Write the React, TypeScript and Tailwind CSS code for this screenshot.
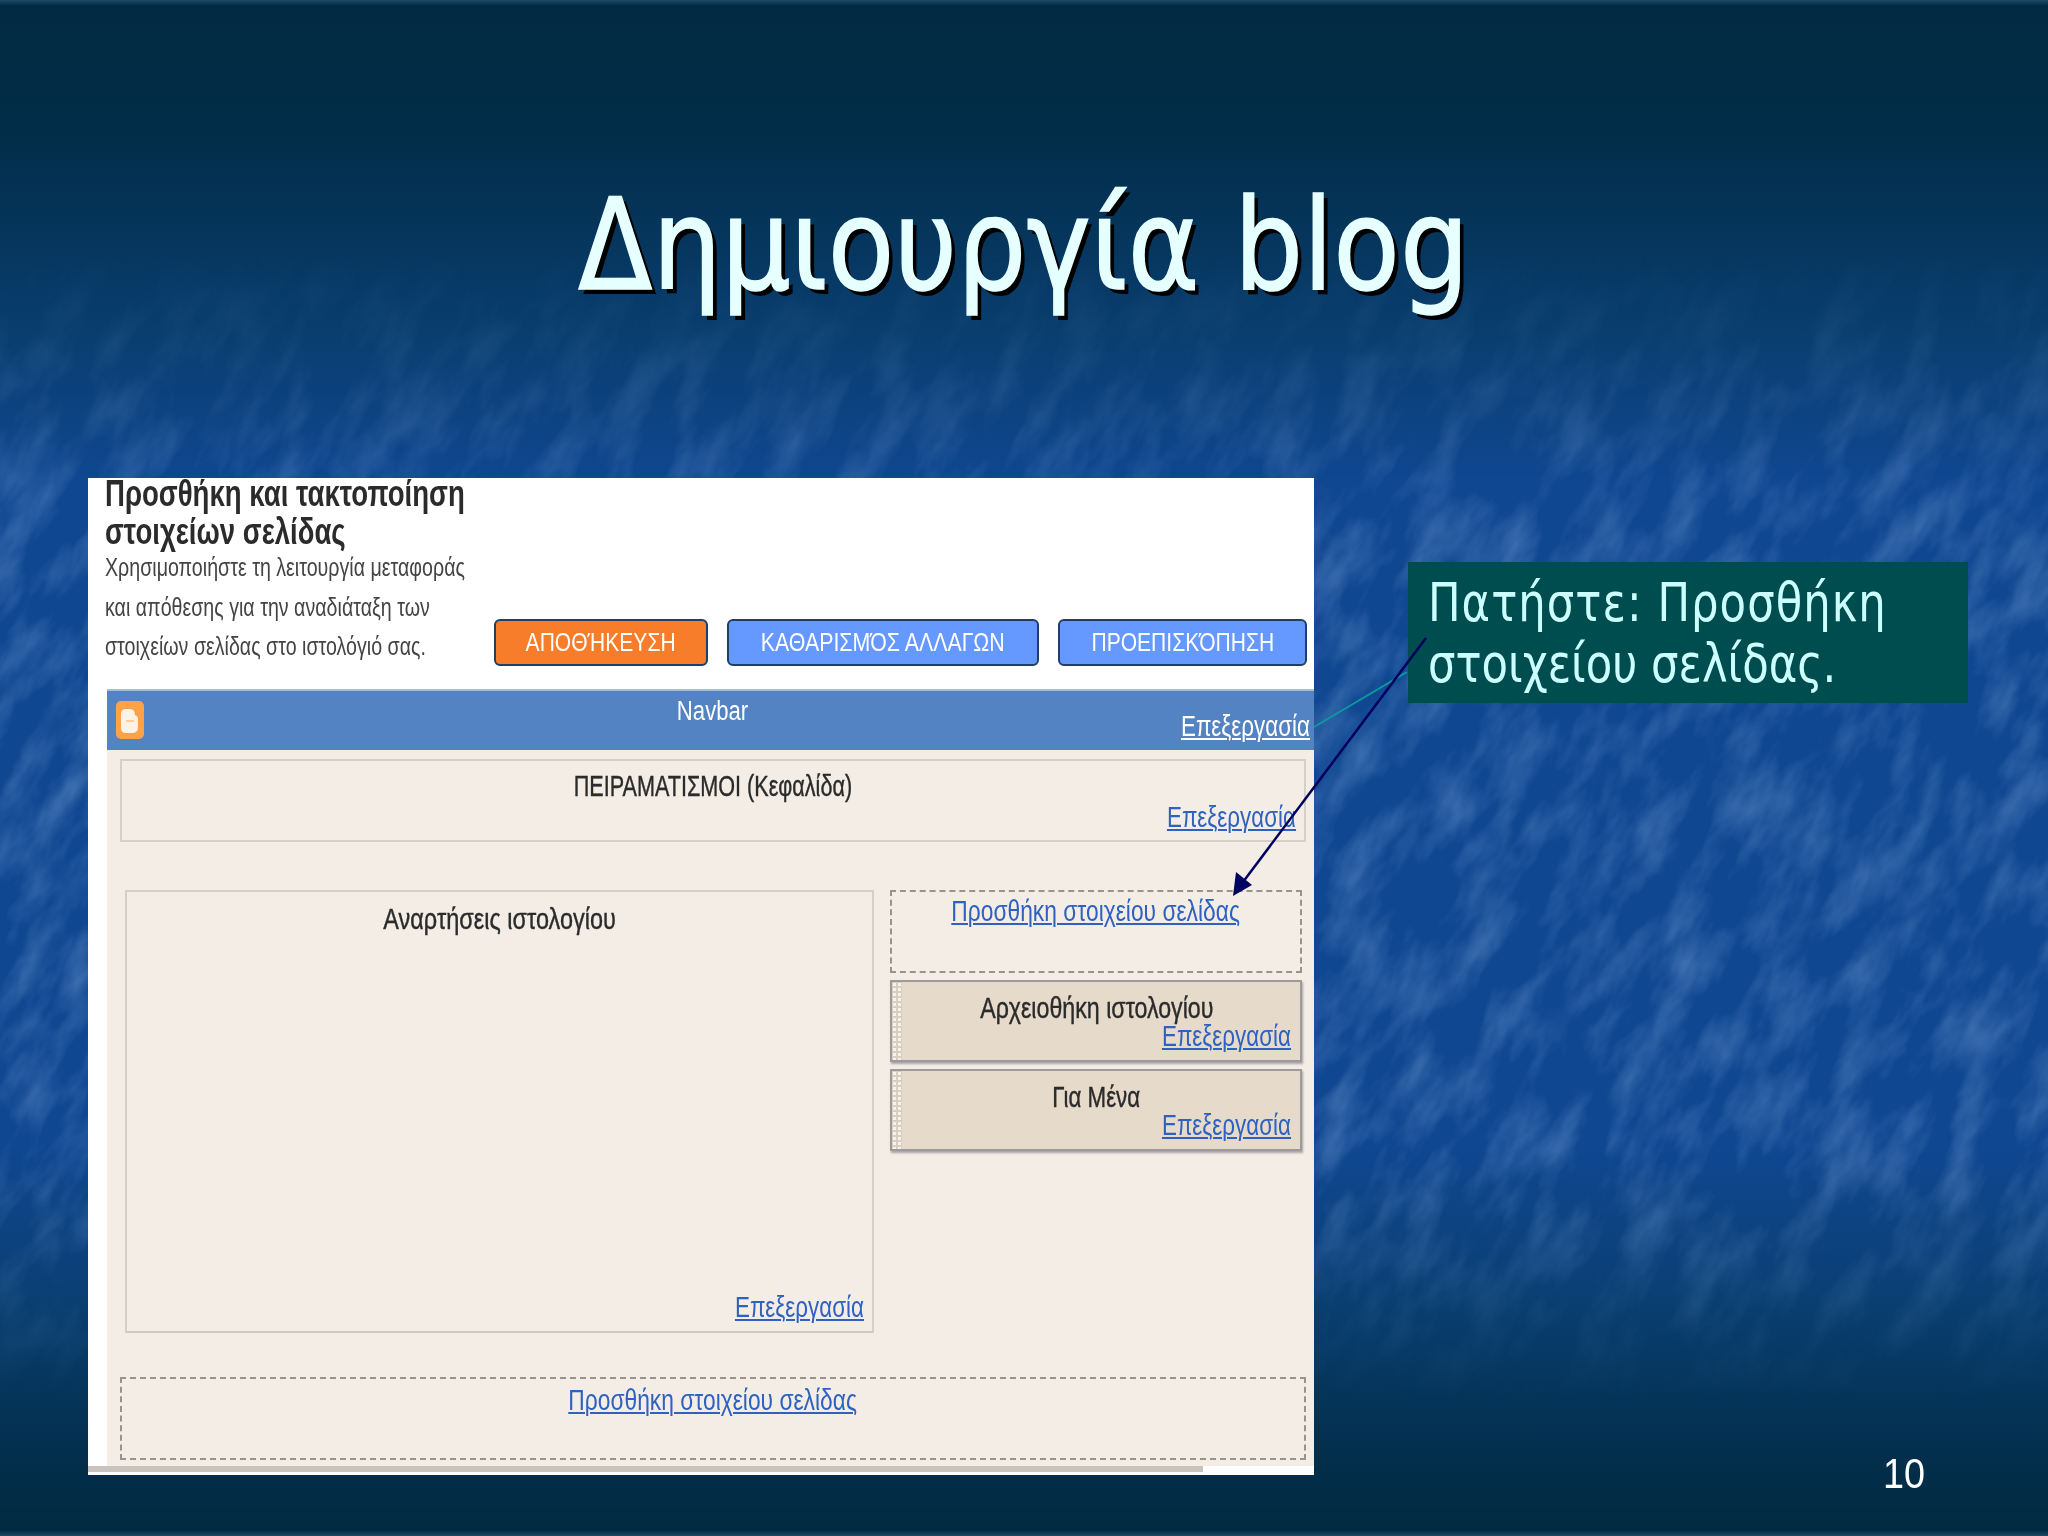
const sans = "font-['Liberation_Sans',sans-serif]";

function EditLink({ children = "Επεξεργασία", className = "origin-right scale-x-[0.773]" }: { children?: string; className?: string }) {
  return (
    <a className={`inline-block whitespace-nowrap text-[29px] leading-[30px] text-[#2f62c0] underline decoration-2 underline-offset-2 ${sans} ${className}`}>
      {children}
    </a>
  );
}

function AddLink({ className = "" }: { className?: string }) {
  return <EditLink className={`origin-center scale-x-[0.786] ${className}`}>Προσθήκη στοιχείου σελίδας</EditLink>;
}

function Grip() {
  return <div className="w-[10px] self-stretch bg-[radial-gradient(circle,#f7f2ea_1.5px,#d8cfc2_2px)] bg-[length:5px_5px]" />;
}

function Widget({ title, squeeze }: { title: string; squeeze: string }) {
  return (
    <div className="flex h-[82px] border-2 border-[#9d9a9c] bg-[#e6dacb] pr-[9px] shadow-[1px_2px_2px_rgba(90,90,110,0.5)]">
      <Grip />
      <div className="flex flex-1 flex-col">
        <div className={`mt-[9px] h-[34px] text-center text-[29px] leading-[34px] text-[#2b2b2b] [-webkit-text-stroke:0.4px_#2b2b2b] ${sans}`}>
          <span className={`inline-block whitespace-nowrap ${squeeze}`}>{title}</span>
        </div>
        <div className="-mt-[4px] text-right">
          <EditLink />
        </div>
      </div>
    </div>
  );
}

function Panel() {
  return (
    <div className="flex h-[997px] w-[1226px] shrink-0 flex-col bg-white">
      <div className="flex h-[211px] shrink-0 pl-[17px] pr-[6px]">
        <div className="w-[389px] shrink-0 whitespace-nowrap">
          <h2 className={`-mt-[3px] origin-left scale-x-[0.745] text-[37px] leading-[38px] font-bold text-[#2b2b2b] ${sans}`}>
            Προσθήκη και τακτοποίηση<br />στοιχείων σελίδας
          </h2>
          <p className={`-mt-[3px] origin-left scale-x-[0.755] text-[26px] leading-[39.5px] text-[#444444] ${sans}`}>
            Χρησιμοποιήστε τη λειτουργία μεταφοράς<br />
            και απόθεσης για την αναδιάταξη των<br />
            στοιχείων σελίδας στο ιστολόγιό σας.
          </p>
        </div>
        <div className={`mt-[141px] flex h-[47px] gap-[19px] text-[26px] text-white ${sans}`}>
          <button className="w-[214px] rounded-[6px] border-2 border-[#1f3f66] bg-[#f77d2a]">
            <span className="inline-block whitespace-nowrap scale-x-[0.81]">ΑΠΟΘΉΚΕΥΣΗ</span>
          </button>
          <button className="w-[312px] rounded-[6px] border-2 border-[#1f3f66] bg-[#6699ff]">
            <span className="inline-block whitespace-nowrap scale-x-[0.82]">ΚΑΘΑΡΙΣΜΌΣ ΑΛΛΑΓΩΝ</span>
          </button>
          <button className="w-[249px] rounded-[6px] border-2 border-[#1f3f66] bg-[#6699ff]">
            <span className="inline-block whitespace-nowrap scale-x-[0.81]">ΠΡΟΕΠΙΣΚΌΠΗΣΗ</span>
          </button>
        </div>
      </div>

      <div className="ml-[19px] flex flex-1 flex-col bg-[#f4ede6]">
        <div className="relative flex h-[61px] items-start border-t-2 border-[#a9bdd6] bg-[#5383c3] pl-[9px] pr-[4px]">
          <svg className="mt-[10px] h-[38px] w-[28px] shrink-0" viewBox="0 0 28 38">
            <rect width="28" height="38" rx="5" fill="#ffa247" />
            <path d="M5 13 q0 -5 5 -5 h4 q5 0 5 6 q3 1 3 4 v8 q0 6 -6 6 h-6 q-5 0 -5 -5 z" fill="#fff3e6" />
            <rect x="10" y="19" width="8" height="2" fill="#ffcf9a" />
          </svg>
          <span className={`absolute left-0 right-0 top-[4px] pl-[4px] text-center text-[27px] leading-[32px] text-white ${sans}`}>
            <span className="inline-block scale-x-[0.82]">Navbar</span>
          </span>
          <div className="mt-[20px] flex-1 text-right">
            <EditLink className="origin-right scale-x-[0.773] !text-white" />
          </div>
        </div>

        <div className="ml-[13px] mr-[8px] mt-[9px] h-[83px] border-2 border-[#d5cfc8] px-[8px]">
          <div className={`mt-[10px] text-center text-[29px] leading-[30px] text-[#2b2b2b] [-webkit-text-stroke:0.4px_#2b2b2b] ${sans}`}>
            <span className="inline-block whitespace-nowrap scale-x-[0.745]">ΠΕΙΡΑΜΑΤΙΣΜΟΙ (Κεφαλίδα)</span>
          </div>
          <div className="mt-[1px] text-right">
            <EditLink />
          </div>
        </div>

        <div className="mt-[48px] flex gap-[16px] pl-[18px] pr-[12px]">
          <div className="flex h-[443px] w-[749px] flex-col border-2 border-[#d5cfc8] border-b-[#cfc8c1]">
            <div className={`mt-[10px] text-center text-[29px] leading-[34px] text-[#2b2b2b] [-webkit-text-stroke:0.4px_#2b2b2b] ${sans}`}>
              <span className="inline-block whitespace-nowrap scale-x-[0.81]">Αναρτήσεις ιστολογίου</span>
            </div>
            <div className="mb-[8px] mt-auto pr-[8px] text-right">
              <EditLink />
            </div>
          </div>
          <div className="flex w-[412px] flex-col gap-[7px]">
            <div className="h-[83px] border-2 border-dashed border-[#99938d] text-center">
              <AddLink className="mt-[4px]" />
            </div>
            <Widget title="Αρχειοθήκη ιστολογίου" squeeze="scale-x-[0.8]" />
            <Widget title="Για Μένα" squeeze="scale-x-[0.77]" />
          </div>
        </div>

        <div className="ml-[13px] mr-[8px] mt-[44px] h-[83px] border-2 border-dashed border-[#99938d] text-center">
          <AddLink className="mt-[6px]" />
        </div>
      </div>
      <div className="flex h-[9px] shrink-0 pb-[3px]">
        <div className="w-[1115px] bg-[#c9c3bd]" />
      </div>
    </div>
  );
}

export default function App() {
  return (
    <div className="relative h-[1536px] w-[2048px] overflow-hidden bg-[linear-gradient(180deg,#1b4a66_0px,#022a42_6px,#022d48_130px,#0a3f72_350px,#0f4790_480px,#0f4790_1150px,#0a3f72_1300px,#03304f_1440px,#022a40_1530px,#1b4a66_1536px)]">
      <div className="pointer-events-none absolute inset-0 [mask-image:linear-gradient(180deg,transparent_250px,black_560px,black_1150px,transparent_1400px)]">
        <svg className="absolute -left-[500px] -top-[700px] h-[3000px] w-[3000px] rotate-[30deg]">
          <filter id="grain" x="0" y="0" width="100%" height="100%">
            <feTurbulence type="fractalNoise" baseFrequency="0.03 0.012" numOctaves="4" seed="7" />
            <feColorMatrix values="0 0 0 0 0.3  0 0 0 0 0.5  0 0 0 0 0.85  0.7 0 0 0 -0.28" />
          </filter>
          <rect width="3000" height="3000" filter="url(#grain)" />
        </svg>
      </div>

      <div className="relative flex h-full flex-col">
        <h1 className="h-[478px] pt-[161px] text-center font-['DejaVu_Sans',sans-serif] text-[126px] leading-[170px] text-[#e6ffff] [-webkit-text-stroke:1.5px_#e6ffff] [text-shadow:5px_5px_0_#000]">
          <span className="inline-block whitespace-nowrap scale-x-[0.864]">Δημιουργία blog</span>
        </h1>
        <div className="flex flex-1 pl-[88px]">
          <Panel />
          <div className="ml-[94px] flex h-[1020px] w-[560px] flex-col">
            <div className="mt-[84px] h-[141px] bg-[#004d50] px-[20px] pt-[10px] font-['DejaVu_Sans',sans-serif] text-[53px] leading-[61px] text-[#ccffff]">
              <p className="origin-left scale-x-[0.817] whitespace-nowrap">
                <span className="tracking-[1.3px]">Πατήστε: Προσθήκη</span>
                <br />
                στοιχείου σελίδας.
              </p>
            </div>
            <div className={`ml-[475px] mt-auto origin-left scale-x-[0.9] text-[42px] leading-[48px] text-white ${sans}`}>10</div>
          </div>
        </div>
      </div>

      {/* callout connector and arrow lie over the panel */}
      <svg className="pointer-events-none absolute inset-0 h-[1536px] w-[2048px]">
        <line x1="1314" y1="727" x2="1407" y2="672" stroke="#0a9a9f" strokeWidth="2" />
        <line x1="1426" y1="638" x2="1240" y2="886" stroke="#00005e" strokeWidth="2.5" />
        <path d="M1233 896 L1236 872 L1252 885 Z" fill="#00005e" />
      </svg>
    </div>
  );
}
